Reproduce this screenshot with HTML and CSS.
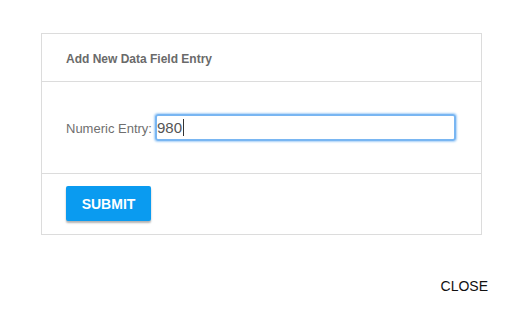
FILE: index.html
```html
<!DOCTYPE html>
<html>
<head>
<meta charset="utf-8">
<link rel="stylesheet" href="styles.css">
</head>
<body>
<div class="page">
  <div class="card">
    <div class="card-header">Add New Data Field Entry</div>
    <div class="card-body">
      <label class="field-label">Numeric Entry:</label><div class="input">980<span class="caret"></span></div>
    </div>
    <div class="card-footer">
      <button class="submit">SUBMIT</button>
    </div>
  </div>
  <div class="actions">
    <span class="close">CLOSE</span>
  </div>
</div>
</body>
</html>
```
FILE: styles.css
```css
* { box-sizing: border-box; }
html, body { margin: 0; padding: 0; background: #fff; }
body { font-family: "Liberation Sans", Arial, sans-serif; }
.page { padding: 33px 30px 0 41px; width: 517px; height: 313px; }
.card {
  width: 441px;
  border: 1px solid #dcdcdc;
}
.card-header {
  height: 48px;
  display: flex;
  align-items: center;
  padding: 2px 0 0 24px;
  font-size: 12px;
  font-weight: bold;
  color: #6a6a6a;
  border-bottom: 1px solid #dcdcdc;
}
.card-body {
  height: 92px;
  display: flex;
  align-items: center;
  padding: 0 0 0 24px;
  border-bottom: 1px solid #dcdcdc;
}
.field-label {
  font-size: 13px;
  color: #6f6f6f;
  margin-right: 3px;
  margin-top: 1px;
}
.input {
  width: 301px;
  height: 27px;
  border: 2px solid #79b6f2;
  border-radius: 3px;
  box-shadow: 0 0 2px 1px #a8d0f7;
  font-size: 15px;
  color: #555;
  display: flex;
  align-items: center;
  padding-left: 0;
}
.caret {
  display: inline-block;
  width: 1px;
  height: 17px;
  background: #333;
  margin-left: 1px;
}
.card-footer {
  height: 60px;
  padding: 12px 0 0 24px;
}
.submit {
  width: 85px;
  height: 35px;
  border: none;
  border-radius: 2px;
  background: #0a9bf0;
  color: #fff;
  font-family: "Liberation Sans", Arial, sans-serif;
  font-size: 14px;
  font-weight: bold;
  box-shadow: 0 2px 2px rgba(0,0,0,0.3);
  padding: 0;
}
.actions {
  display: flex;
  justify-content: flex-end;
  padding-top: 43px;
  width: 447px;
}
.close {
  font-size: 14px;
  color: #111;
}
```
